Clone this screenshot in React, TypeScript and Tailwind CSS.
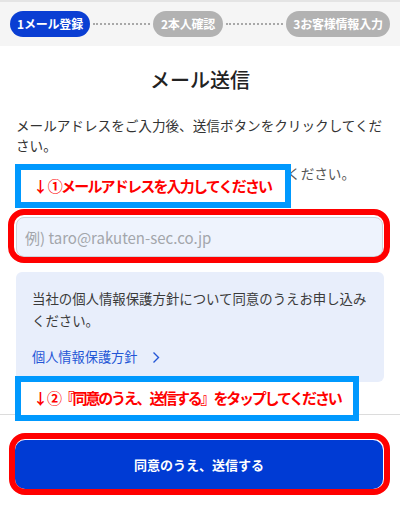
import React from "react";

const jp = { fontFamily: '"Noto Sans CJK JP", "Noto Sans", sans-serif' };

function Step({ label, active, width }: { label: string; active?: boolean; width: string }) {
  return (
    <div
      className={`${width} h-[26px] shrink-0 rounded-full flex items-center justify-center text-[12px] font-bold text-white tracking-[-0.2px] ${
        active ? "bg-[#0a3ed3]" : "bg-[#b2b2b2]"
      }`}
    >
      {label}
    </div>
  );
}

function Dots() {
  return <div className="flex-1 mx-[3px] border-t-2 border-dotted border-[#a8a8a8]" />;
}

export default function App() {
  return (
    <div className="relative w-[400px] h-[516px] overflow-hidden bg-white text-[#333]" style={jp}>
      {/* step header */}
      <div className="border-t-2 border-[#e4e4e4] bg-[#f5f5f5] h-[46px] px-[10px] flex items-center">
        <Step label="1メール登録" active width="w-[80px]" />
        <Dots />
        <Step label="2本人確認" width="w-[70px]" />
        <Dots />
        <Step label="3お客様情報入力" width="w-[104px]" />
      </div>

      <div className="px-4">
        <h1 className="mt-[20px] text-center text-[20px] leading-[28px] font-medium text-[#222]">メール送信</h1>

        <p className="mt-[21px] text-[13.6px] leading-[20px]">
          メールアドレスをご入力後、送信ボタンをクリックしてください。
        </p>
        <p className="mt-[8px] text-[13.6px] leading-[20px] text-[#555]">ご利用中のメールアドレスを正しく入力してください。</p>

        <input
          type="email"
          placeholder="例) taro@rakuten-sec.co.jp"
          className="mt-[34px] block w-[367px] h-[40px] rounded-[8px] border border-[#cfd3da] bg-[#eef3fd] px-[8px] text-[15px] placeholder:text-[#a3a6ab] outline-none"
        />

        <div className="mt-[15px] w-[368px] rounded-[6px] bg-[#e8eefb] px-4 pt-[15px] pb-[14px]">
          <p className="text-[13.4px] leading-[22px] text-[#3a3a3a]">
            当社の個人情報保護方針について同意のうえお申し込みください。
          </p>
          <a href="#" className="mt-[15px] flex items-center gap-[14px] text-[13.2px] leading-[22px] text-[#2456d6]">
            個人情報保護方針
            <svg width="8" height="13" viewBox="0 0 8 13" fill="none" stroke="currentColor" strokeWidth="1.4">
              <path d="M1.5 1.5l5 5-5 5" />
            </svg>
          </a>
        </div>
      </div>

      {/* footer */}
      <div className="mt-[32px] border-t border-[#dcdcdc] px-[15px] pt-[25px]">
        <button className="w-[368px] h-[49px] rounded-[10px] bg-[#003bd4] text-white text-[13px] font-bold">
          同意のうえ、送信する
        </button>
      </div>

      {/* annotations */}
      <div className="absolute left-[15px] top-[164px] w-[276px] h-[44px] border-[6px] border-[#0099fe] bg-white flex items-center pl-[12px] text-[15px] font-bold text-[#ff0000] tracking-[-1.8px]">
        ↓ ①メールアドレスを入力してください
      </div>
      <div className="absolute left-[8px] top-[209px] w-[382px] h-[54px] border-[6px] border-[#ff0000] rounded-[16px]" />
      <div className="absolute left-[15px] top-[376px] w-[344px] h-[45px] border-[6px] border-[#0099fe] bg-white flex items-center pl-[12px] text-[15px] font-bold text-[#ff0000] tracking-[-2.2px]">
        ↓ ②『同意のうえ、送信する』をタップしてください
      </div>
      <div className="absolute left-[9px] top-[433px] w-[381px] h-[62px] border-[6px] border-[#ff0000] rounded-[16px]" />
    </div>
  );
}
